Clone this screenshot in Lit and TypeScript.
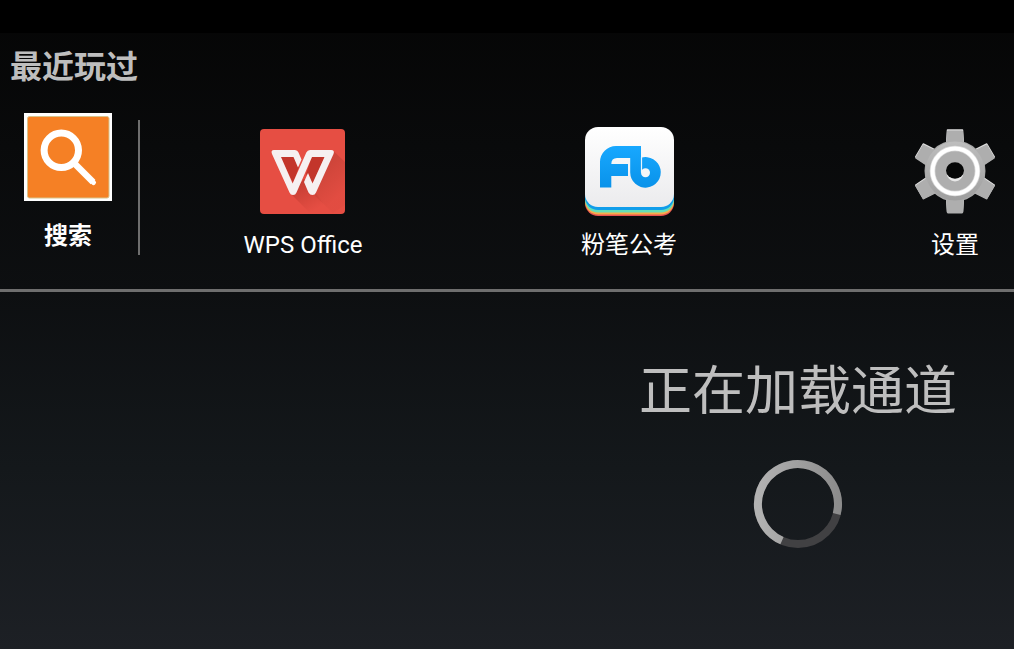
import { LitElement, html, css, svg } from "lit";
import { customElement } from "lit/decorators.js";

const searchIcon = html`<svg width="88" height="88" viewBox="0 0 88 88" aria-hidden="true">
  <rect width="88" height="88" fill="#fff" />
  <rect x="3.5" y="3.5" width="81.500" height="81.500" rx="2" fill="#f58025" stroke="#d9c48c" stroke-width="1" />
  <path d="M50 50 L69 69" stroke="#fff" stroke-width="6.500" />
  <path d="M68 68 L69.500 69.500" stroke="#fff" stroke-width="5" stroke-linecap="round" />
  <circle cx="37.300" cy="37.300" r="17.200" fill="none" stroke="#fff" stroke-width="7" />
</svg>`;

const wpsIcon = html`<svg width="85" height="85" viewBox="0 0 85 85" aria-hidden="true">
  <defs>
    <linearGradient id="wps-shade" gradientUnits="userSpaceOnUse" x1="42" y1="45" x2="60" y2="78">
      <stop offset="0" stop-color="#bf3a30" />
      <stop offset="1" stop-color="#bf3a30" stop-opacity="0" />
    </linearGradient>
    <linearGradient id="wps-shade-right" gradientUnits="userSpaceOnUse" x1="64" y1="40" x2="84" y2="62">
      <stop offset="0" stop-color="#c94338" stop-opacity="0.800" />
      <stop offset="1" stop-color="#c94338" stop-opacity="0.150" />
    </linearGradient>
  </defs>
  <rect width="85" height="85" rx="4" fill="#e64e43" />
  <path d="M73.500 22 L85 33 V76 L73 84 L53 65 Z" fill="url(#wps-shade-right)" />
  <path d="M31 65 L44 50 L56 64 L70 84 H50 Z" fill="url(#wps-shade)" />
  <path d="M20 27 H34 L39 38 L33 54 Z M52 27 H65 L53 54 L46 45 Z" fill="#c3352b" />
  <path d="M48 44 L44 53 L48.500 63.500 Q50 66 52.500 66 Q55 66 56 63.500 L73.500 25 Q75 21 71 21 H50 Q47.500 21 46.300 23.500 L32.600 54.500 L21 28 H33.500 L38 38.500 L41.500 30.500 L38.500 23.500 Q37.500 21 35 21 H14 Q10.500 21 12 25 L29.500 63.500 Q30.500 66 33 66 Q35.500 66 36.500 63.500 L52 28 H64.500 L52.500 54.500 Z" fill="#f6f0f1" />
</svg>`;

const fenbiIcon = html`<svg width="89" height="89" viewBox="0 0 89 89" aria-hidden="true">
  <defs>
    <linearGradient id="fb-paper" x1="0" y1="0" x2="0" y2="1">
      <stop offset="0" stop-color="#fff" />
      <stop offset="1" stop-color="#ebebed" />
    </linearGradient>
    <linearGradient id="fb-blue" gradientUnits="userSpaceOnUse" x1="0" y1="19" x2="0" y2="61">
      <stop offset="0" stop-color="#18a8ff" />
      <stop offset="1" stop-color="#0992ea" />
    </linearGradient>
  </defs>
  <rect y="9" width="89" height="80" rx="13" fill="#e85350" />
  <rect y="8" width="89" height="79.500" rx="13" fill="#f5ae4c" />
  <rect y="6" width="89" height="79.500" rx="13" fill="#64dfb8" />
  <rect y="4" width="89" height="79" rx="13" fill="#109dea" />
  <rect width="89" height="80" rx="13" fill="url(#fb-paper)" />
  <path d="M15 60.500 V35 A16 16 0 0 1 31 19 H56 V30.700 A15.300 15.300 0 1 1 45.200 45.500 V31 H32 Q26.300 31 26.300 37 H43 V49 H26.300 V60.500 Z" fill="url(#fb-blue)" />
  <path d="M56.500 30 V45.500" stroke="#e8f5fd" stroke-width="1.200" />
  <circle cx="60.500" cy="45.700" r="4.500" fill="#f5f6f7" />
</svg>`;

const tooth = (angle: number) =>
  svg`<path d="M-7.500 -41 H7.500 L8.500 -26 H-8.500 Z" transform="rotate(${angle})" />`;
const teeth = [0, 60, 120, 180, 240, 300].map(tooth);
const teethBelow = [0, 60, 120, 180, 240, 300].map(tooth);

const gearIcon = html`<svg width="80" height="86" viewBox="-40 -43 80 86" aria-hidden="true">
  <defs>
    <linearGradient id="gear-metal" gradientUnits="userSpaceOnUse" x1="0" y1="-42" x2="0" y2="42">
      <stop offset="0" stop-color="#c4c4c4" />
      <stop offset="1" stop-color="#989898" />
    </linearGradient>
  </defs>
  <g fill="#dedede" stroke="#dedede" stroke-width="1.500" stroke-linejoin="round">
    ${teeth}
  </g>
  <circle r="30.500" fill="#a8a8a8" />
  <g transform="translate(0 1)" fill="#aeaeae" stroke="#aeaeae" stroke-width="1" stroke-linejoin="round">
    ${teethBelow}
  </g>
  <circle r="29.500" fill="url(#gear-metal)" />
  <circle r="22.500" fill="#aeaeae" stroke="#dadada" stroke-width="5.500" />
  <circle r="22.500" fill="none" stroke="#fff" stroke-width="4" />
  <ellipse cy="1.500" rx="8.500" ry="9" fill="#e8e8e8" />
  <ellipse cy="-0.500" rx="9" ry="8.200" fill="#060707" />
</svg>`;

const apps = [
  { name: "WPS Office", icon: wpsIcon },
  { name: "粉笔公考", icon: fenbiIcon },
  { name: "设置", icon: gearIcon },
];

@customElement("app-root")
export class AppRoot extends LitElement {
  static styles = css`
    :host {
      display: flex;
      flex-direction: column;
      box-sizing: border-box;
      min-height: 100vh;
      overflow: hidden;
      color: #fff;
      font-family: Roboto, "Noto Sans CJK SC", sans-serif;
      background: linear-gradient(#050505, #0d0f11 45%, #14181b 72%, #1d2025);
    }
    .status {
      height: 33px;
      background: #000;
    }
    .recent {
      border-bottom: 3px solid #6e6e6e;
      padding-bottom: 28px;
    }
    .title {
      margin: 0;
      padding: 10px 10px 0;
      font-size: 32px;
      line-height: 48px;
      font-weight: 700;
      color: #bebebe;
    }
    .row {
      display: flex;
      align-items: flex-start;
      padding-top: 22px;
    }
    button {
      display: flex;
      flex-direction: column;
      align-items: center;
      border: 0;
      padding: 0;
      background: none;
      color: inherit;
      font: inherit;
      font-size: 24px;
      line-height: 32px;
      cursor: pointer;
    }
    svg {
      display: block;
    }
    .search {
      gap: 19px;
      margin: 0 26px 0 24px;
      font-weight: 700;
    }
    .apps {
      flex: 1;
      min-width: 0;
      display: flex;
      overflow: hidden;
      margin: 0;
      padding: 0;
      list-style: none;
    }
    .bar {
      flex: none;
      width: 2px;
      height: 135px;
      margin-top: 7px;
      background: #6e6e6e;
    }
    .item {
      flex: none;
      width: 326px;
      display: flex;
      justify-content: center;
    }
    .app {
      padding-top: 13px;
      gap: 13px;
    }
    .icon {
      display: flex;
      height: 90px;
      align-items: center;
    }
    .loading {
      align-self: flex-end;
      display: flex;
      flex-direction: column;
      align-items: center;
      gap: 27px;
      padding: 60px 57px 0 0;
    }
    .message {
      margin: 0;
      font-size: 53px;
      line-height: 80px;
      color: #bebebe;
    }
  `;

  render() {
    return html`
      <div class="status"></div>
      <section class="recent">
        <h1 class="title">最近玩过</h1>
        <div class="row">
          <button class="search">${searchIcon}<span>搜索</span></button>
          <div class="bar"></div>
          <ul class="apps">
            ${apps.map(
              (app) => html`<li class="item">
                <button class="app"><span class="icon">${app.icon}</span><span>${app.name}</span></button>
              </li>`
            )}
          </ul>
        </div>
      </section>
      <main class="loading" role="status">
        <p class="message">正在加载通道</p>
        <svg width="90" height="90" viewBox="-45 -45 90 90" aria-hidden="true">
          <defs>
            <linearGradient id="arc" x1="0" y1="0" x2="1" y2="0">
              <stop offset="0" stop-color="#b2b2b2" />
              <stop offset="1" stop-color="#8c8c8c" />
            </linearGradient>
          </defs>
          <circle r="40" fill="none" stroke="#414143" stroke-width="8" />
          <path d="M-16 36.700 A40 40 0 1 1 38.700 10" fill="none" stroke="url(#arc)" stroke-width="8" />
        </svg>
      </main>
    `;
  }
}
